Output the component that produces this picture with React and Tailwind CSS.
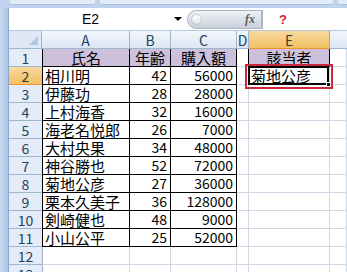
import React from "react";

const names = ["相川明", "伊藤功", "上村海香", "海老名悦郎", "大村央果", "神谷勝也", "菊地公彦", "栗本久美子", "剣崎健也", "小山公平"];
const ages = [42, 28, 32, 26, 34, 52, 27, 36, 48, 25];
const amounts = [56000, 28000, 16000, 7000, 48000, 72000, 36000, 128000, 9000, 52000];

const jp = { fontFamily: '"Noto Sans CJK JP", "Noto Sans", sans-serif' };

const RowHead = ({ n, active }) => (
  <div
    className={`h-[18px] flex items-center justify-center text-[14px] leading-[14px] border-b ${
      active ? "bg-gradient-to-b from-[#f9d99f] to-[#f1c15f] border-[#f29436] text-[#3a3a2a]" : "bg-[#e4ecf7] border-[#9eb6ce] text-[#27415f]"
    }`}
  >
    {n}
  </div>
);

const Cell = ({ children, black, purple, align = "left", leftEdge, className = "" }) => (
  <div
    className={`h-[18px] flex items-end pb-[1px] text-[15px] leading-[15px] text-black border-b border-r ${
      black ? "border-black" : "border-[#d0d7e5]"
    } ${leftEdge ? (black ? "border-l border-l-black" : "border-l border-l-[#9eb6ce]") : ""} ${
      purple ? "bg-[#ccc0da]" : "bg-white"
    } ${align === "right" ? "justify-end pr-[3px]" : align === "center" ? "justify-center" : "justify-start pl-[2px]"} ${className}`}
  >
    {children}
  </div>
);

export default function App() {
  const cols = "grid grid-cols-[33px_88px_41px_66px_12px_81px_1fr]";
  const rows = [];
  for (let i = 0; i < 10; i++) {
    rows.push(
      <div key={i} className={cols}>
        <RowHead n={i + 2} active={i === 0} />
        <Cell black leftEdge>{names[i]}</Cell>
        <Cell black align="right"><span className="text-[14px]">{ages[i]}</span></Cell>
        <Cell black align="right"><span className="text-[14px]">{amounts[i]}</span></Cell>
        <Cell />
        {i === 0 ? (
          <div className="h-[18px] border-b border-r border-[#d0d7e5] bg-white">
            <div className="relative h-[19px] -mt-[1px] -ml-[1px] border-2 border-black bg-white flex items-end pl-[1px] text-[15px] leading-[15px]">
              <span>菊地公彦</span>
              <div className="absolute -right-[4px] -bottom-[4px] w-[5px] h-[5px] bg-black border border-white" />
            </div>
          </div>
        ) : (
          <Cell />
        )}
        <Cell />
      </div>
    );
  }

  return (
    <div className="w-[347px] h-[272px] overflow-hidden bg-white relative" style={jp}>
      {/* ribbon bottom */}
      <div className="h-[8px] bg-[#bfd3ec] flex gap-[5px] pl-[10px]">
        <div className="w-[85px] h-[5px] bg-[#e3ecf7] rounded-b-[3px] border-b border-[#a9c1e0]" />
        <div className="w-[233px] h-[5px] bg-[#e3ecf7] rounded-b-[3px] border-b border-[#a9c1e0]" />
        <div className="flex-1 h-[5px] bg-[#e3ecf7] rounded-bl-[3px] border-b border-[#a9c1e0]" />
      </div>
      <div className="flex">
        <div className="w-[9px] bg-gradient-to-r from-[#c9daf0] to-[#a9c2e3] border-r border-[#8aa8d0] shrink-0" />
        <div className="flex-1">
          {/* formula bar */}
          <div className="h-[23px] flex items-center bg-white border-b border-[#b5c9e3]">
            <div className="w-[163px] text-center text-[14px] text-black leading-none" style={{ fontFamily: '"Liberation Sans", sans-serif' }}>
              E2
            </div>
            <div className="w-0 h-0 border-l-[4px] border-r-[4px] border-t-[4px] border-l-transparent border-r-transparent border-t-black ml-[2px]" />
            <div className="ml-[5px] w-[75px] h-[19px] rounded-l-full bg-gradient-to-b from-[#eef1f5] via-[#dde2e9] to-[#c9d0da] border border-[#aab4c2] flex items-center">
              <div className="ml-[3px] w-[11px] h-[11px] rounded-full bg-gradient-to-b from-white to-[#dfe4ea] border border-[#c2cad5]" />
              <span className="ml-auto mr-[6px] text-[12px] italic font-bold text-[#5a5a5a] leading-none" style={{ fontFamily: '"Liberation Serif", serif' }}>
                fx
              </span>
            </div>
            <div className="w-px h-[19px] bg-[#aab4c2]" />
            <span className="ml-[16px] text-[13px] font-bold text-[#d2202f] leading-none" style={{ fontFamily: '"Liberation Sans", sans-serif' }}>
              ?
            </span>
          </div>
          {/* column headers */}
          <div className={`${cols} h-[18px]`}>
            <div className="bg-[#dfe8f5] border-b border-r border-[#9eb6ce] relative">
              <div className="absolute right-[3px] bottom-[3px] w-[9px] h-[9px] bg-[#b4c6de] [clip-path:polygon(100%_0,100%_100%,0_100%)]" />
            </div>
            {["A", "B", "C", "D"].map((l) => (
              <div key={l} className="bg-gradient-to-b from-[#f3f7fc] to-[#dce6f4] border-b border-r border-[#9eb6ce] flex items-center justify-center text-[14px] text-[#27415f] leading-none">
                {l}
              </div>
            ))}
            <div className="bg-gradient-to-b from-[#f9d99f] to-[#f1c15f] border-b border-r border-[#f29436] flex items-center justify-center text-[14px] text-[#3a3a2a] leading-none">
              E
            </div>
            <div className="bg-gradient-to-b from-[#f3f7fc] to-[#dce6f4] border-b border-[#9eb6ce]" />
          </div>
          {/* row 1 */}
          <div className={cols}>
            <RowHead n={1} />
            <Cell black purple leftEdge align="center">氏名</Cell>
            <Cell black purple align="center">年齢</Cell>
            <Cell black purple align="center">購入額</Cell>
            <Cell className="border-r-black" />
            <Cell black purple align="center">該当者</Cell>
            <Cell />
          </div>
          {rows}
          {[12, 13].map((n) => (
            <div key={n} className={cols}>
              <RowHead n={n} />
              <Cell leftEdge />
              <Cell />
              <Cell />
              <Cell />
              <Cell />
              <Cell />
            </div>
          ))}
        </div>
      </div>
      {/* red annotation box */}
      <div className="absolute left-[245px] top-[64px] w-[88px] h-[25px] border-2 border-[#c8283c]" />
    </div>
  );
}
